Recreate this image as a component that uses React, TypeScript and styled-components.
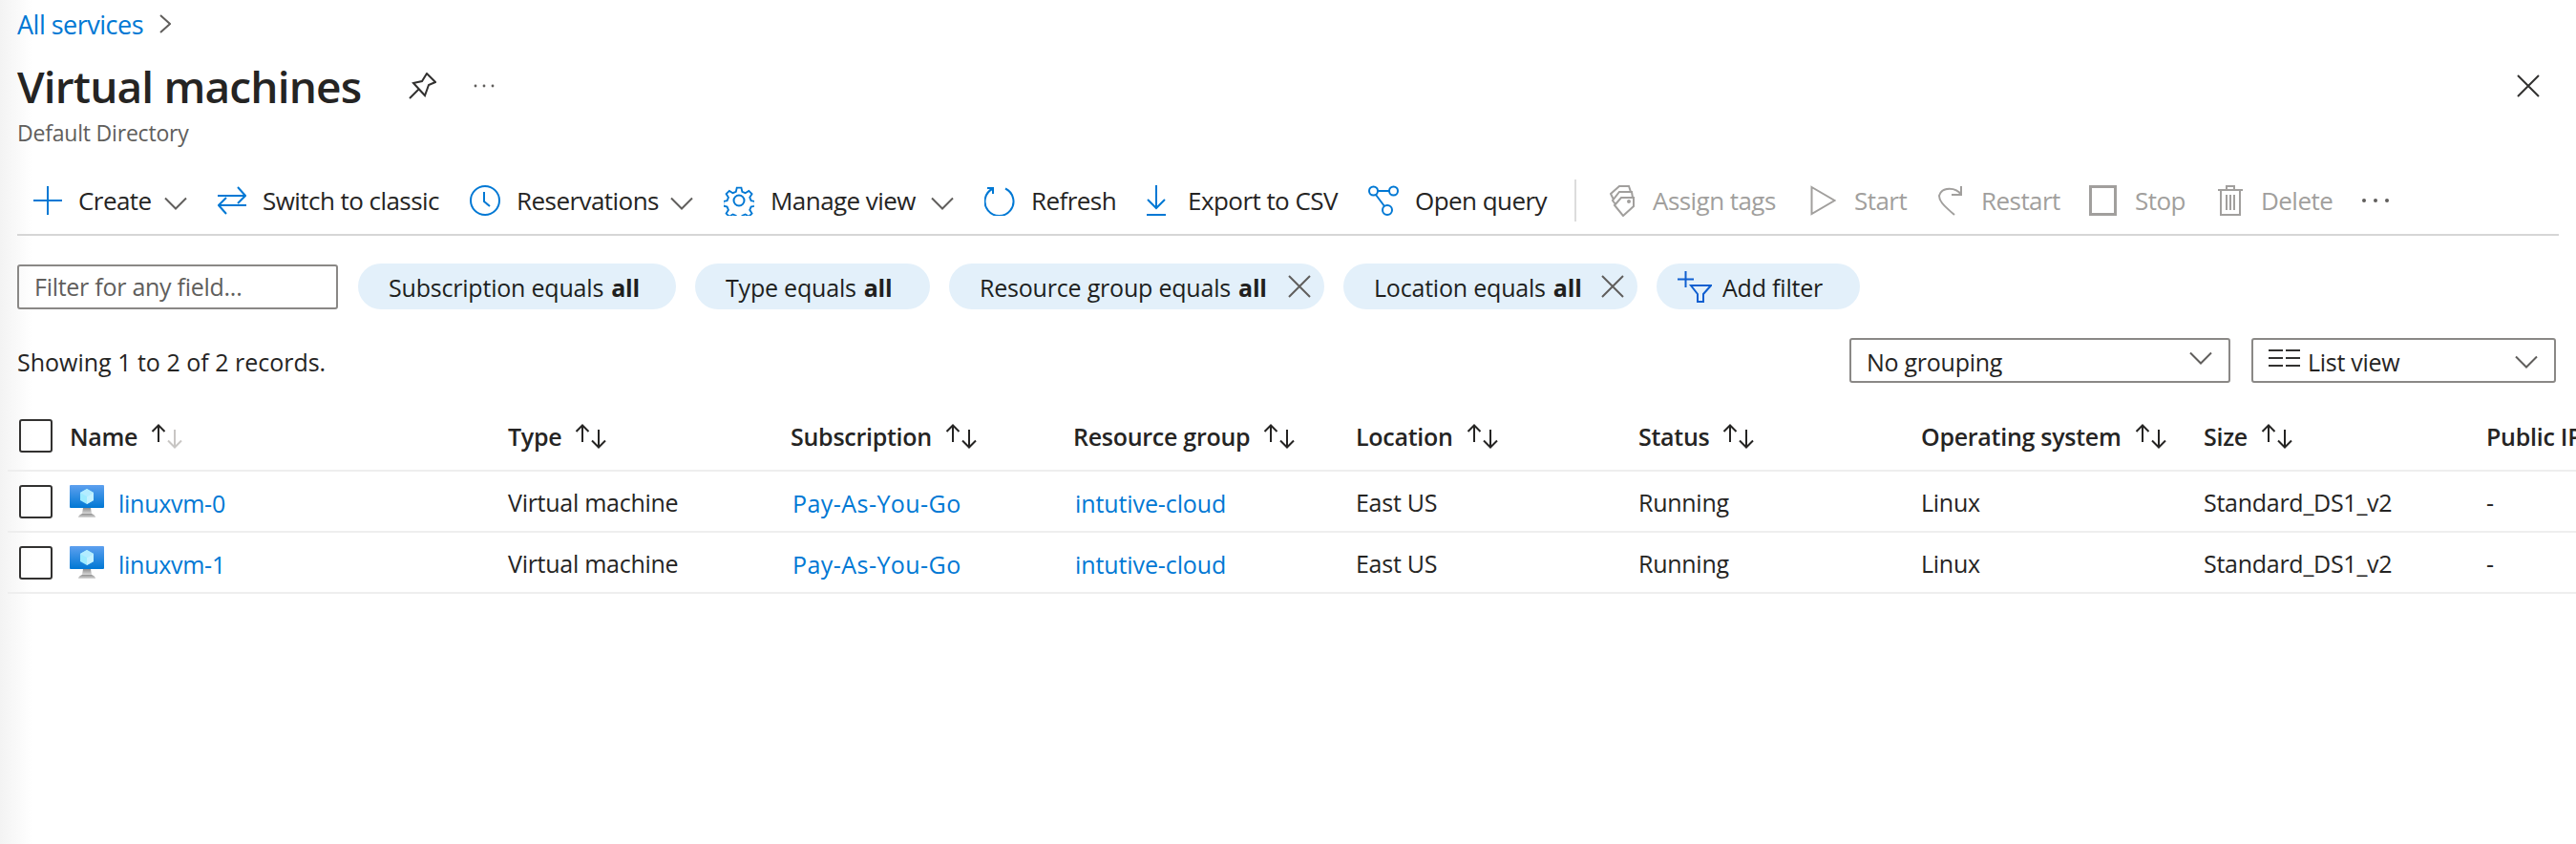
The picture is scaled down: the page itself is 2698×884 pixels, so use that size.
import React from 'react';
import styled, { createGlobalStyle } from 'styled-components';

const GlobalStyle = createGlobalStyle`
  html, body {
    margin: 0;
    padding: 0;
    background: #ffffff;
  }
`

const Page = styled.div`
  width: 2698px;
  height: 884px;
  box-sizing: border-box;
  padding: 0 18px;
  overflow: hidden;
  font-family: "Open Sans", "Noto Sans", sans-serif;
  font-size: 25px;
  letter-spacing: -0.27px;
  color: #252423;
  background: linear-gradient(90deg, #f3f3f3 0, #ffffff 34px);
`

const Breadcrumb = styled.div`
  height: 50px;
  display: flex;
  align-items: center;
  gap: 17px;
  font-size: 27px;
  letter-spacing: -0.5px;
`

const Link = styled.a`
  color: #0078d4;
  text-decoration: none;
`

const TitleRow = styled.div`
  height: 50px;
  margin-top: 15px;
  display: flex;
  align-items: center;
`

const Title = styled.h1`
  margin: 0 50px 0 0;
  font-size: 46px;
  font-weight: 600;
  letter-spacing: -0.85px;
  color: #252423;
`

const TitleAction = styled.span`
  display: flex;
  margin-right: 38px;
`

const CloseAction = styled.span`
  display: flex;
  margin-left: auto;
  margin-right: 20px;
`

const Subtitle = styled.div`
  height: 40px;
  margin-top: 4px;
  display: flex;
  align-items: center;
  font-size: 23px;
  letter-spacing: -0.2px;
  color: #605e5c;
`

const Toolbar = styled.div`
  height: 70px;
  margin-top: 16px;
  padding-left: 17px;
  display: flex;
  align-items: center;
  gap: 32px;
  border-bottom: 2px solid #d6d6d6;
  font-size: 26px;
  letter-spacing: -0.55px;
`

const ToolButton = styled.div<{ $disabled?: boolean; $narrow?: boolean }>`
  display: flex;
  align-items: center;
  gap: ${p => (p.$narrow ? 22 : p.$disabled ? 19 : 17)}px;
  margin-left: ${p => (p.$narrow ? 7 : p.$disabled ? 3 : 0)}px;
  color: ${p => (p.$disabled ? '#a19f9d' : '#252423')};
`

const Label = styled.span<{ $w: number }>`
  display: block;
  width: ${p => p.$w}px;
  white-space: nowrap;

  & + svg {
    margin-top: 6px;
  }
`

const Divider = styled.span`
  width: 2px;
  height: 44px;
  background: #dcdcdc;
`

const Filters = styled.div`
  margin-top: 29px;
  display: flex;
  align-items: center;
  gap: 20px;
`

const FilterInput = styled.div`
  width: 336px;
  height: 47px;
  box-sizing: border-box;
  border: 2px solid #8a8886;
  border-radius: 3px;
  padding-left: 16px;
  display: flex;
  align-items: center;
  color: #605e5c;
  margin-right: 1px;
`

const Chip = styled.div<{ $w: number }>`
  width: ${p => p.$w}px;
  height: 48px;
  box-sizing: border-box;
  border-radius: 24px;
  background: #e3f0fa;
  padding: 2px 14px 0 32px;
  display: flex;
  align-items: center;
  white-space: nowrap;
  letter-spacing: -0.2px;
  color: #201f1e;

  b {
    font-weight: 700;
    margin-left: 8px;
  }

  svg {
    margin-left: auto;
    margin-top: -2px;
  }
`

const AddChip = styled(Chip)`
  padding-left: 22px;
  gap: 11px;

  svg {
    margin-left: 0;
  }
`

const SummaryRow = styled.div`
  height: 47px;
  margin-top: 30px;
  padding-right: 3px;
  display: flex;
  align-items: center;
  gap: 22px;
`

const Summary = styled.div`
  margin-right: auto;
  padding-top: 2px;
  letter-spacing: 0;
`

const Select = styled.div<{ $w: number }>`
  width: ${p => p.$w}px;
  height: 47px;
  box-sizing: border-box;
  border: 2px solid #8a8886;
  border-radius: 3px;
  padding: 3px 17px 0 16px;
  display: flex;
  align-items: center;
  gap: 8px;

  svg:first-child {
    margin-top: -8px;
  }

  svg:last-child {
    margin-left: auto;
  }
`

const Table = styled.div`
  margin-left: -10px;
  width: 3100px;
`

const TableRow = styled.div<{ $header?: boolean }>`
  height: ${p => (p.$header ? 93 : 64)}px;
  box-sizing: border-box;
  padding-left: 12px;
  padding-top: ${p => (p.$header ? 20 : 0)}px;
  display: grid;
  grid-template-columns: 53px 459px repeat(8, 296px);
  align-items: center;
  border-bottom: 2px solid #eeeeee;
  font-weight: ${p => (p.$header ? 600 : 400)};
`

const Check = styled.span`
  display: block;
  width: 35px;
  height: 35px;
  box-sizing: border-box;
  border: 2px solid #323130;
  border-radius: 3px;
`

const HeaderCell = styled.div`
  display: flex;
  align-items: center;
  gap: 14px;
  white-space: nowrap;
`

const NameCell = styled.div`
  display: flex;
  align-items: center;
  gap: 15px;

  a {
    padding-top: 3px;
  }
`

const Cell = styled.div`
  padding-top: 2px;
  white-space: nowrap;
`

const LinkCell = styled(Cell)<{ $spacing: number }>`
  padding: 4px 0 0 2px;
  letter-spacing: ${p => p.$spacing}px;
`

const Icon: React.FC<{ w?: number; h?: number; children: React.ReactNode; stroke?: string }> = ({ w = 32, h = 32, children, stroke = '#0078d4' }) => (
  <svg width={w} height={h} viewBox={`0 0 ${w} ${h}`} fill="none" stroke={stroke} strokeWidth={2} style={{ flexShrink: 0 }}>
    {children}
  </svg>
)

const Chevron = () => (
  <Icon w={24} h={14} stroke="#605e5c"><path d="M1 1.5 12 12.5 23 1.5" /></Icon>
)

const Cross = ({ size = 24, color = '#605e5c' }: { size?: number; color?: string }) => (
  <Icon w={size} h={size} stroke={color}><path d={`M1 1 ${size - 1} ${size - 1}M${size - 1} 1 1 ${size - 1}`} /></Icon>
)

const Dots = ({ color = '#605e5c', r = 1.5, w = 30 }: { color?: string; r?: number; w?: number }) => (
  <svg width={w} height="6" viewBox={`0 0 ${w} 6`} fill={color}>
    <circle cx="3" cy="3" r={r} /><circle cx={w / 2} cy="3" r={r} /><circle cx={w - 3} cy="3" r={r} />
  </svg>
)

const SortArrows = ({ muted }: { muted?: boolean }) => (
  <svg width="34" height="26" viewBox="0 0 34 26" fill="none" strokeWidth="2">
    <path d="M8 19V2M1.5 8 8 1.5 14.5 8" stroke="#252423" />
    <path d="M25 6V24M18 17.5 25 24.5 32 17.5" stroke={muted ? '#c8c6c4' : '#252423'} />
  </svg>
)

const VmIcon = () => (
  <svg width="36" height="34" viewBox="0 0 36 34">
    <defs>
      <linearGradient id="vmScreen" x1="0" y1="0" x2="0" y2="1">
        <stop offset="0" stopColor="#5ea0ef" />
        <stop offset="1" stopColor="#0078d4" />
      </linearGradient>
      <linearGradient id="vmStand" x1="0" y1="0" x2="0" y2="1">
        <stop offset="0" stopColor="#8f8f8f" />
        <stop offset="1" stopColor="#d8d8d8" />
      </linearGradient>
    </defs>
    <rect x="0" y="0" width="36" height="24" rx="1" fill="url(#vmScreen)" />
    <path d="M14 24h8l1 6h-10z" fill="url(#vmStand)" />
    <path d="M9 34c0-2 3-4 5-4h8c2 0 5 2 5 4z" fill="url(#vmStand)" />
    <path d="M18 4 25 8v8l-7 4-7-4V8z" fill="#9cebff" />
    <path d="M18 12 25 8v8l-7 4z" fill="#c3f1ff" />
    <path d="M18 12 11 8l7-4 7 4z" fill="#b3ecff" />
  </svg>
)

const columns = ['Type', 'Subscription', 'Resource group', 'Location', 'Status', 'Operating system', 'Size', 'Public IP']
const machines = ['linuxvm-0', 'linuxvm-1']
const chips = [
  { label: 'Subscription equals', w: 333 },
  { label: 'Type equals', w: 246 },
  { label: 'Resource group equals', w: 393, remove: true },
  { label: 'Location equals', w: 308, remove: true },
]

const App: React.FC = () => (
  <Page>
    <GlobalStyle />
    <Breadcrumb>
      <Link>All services</Link>
      <Icon w={12} h={20} stroke="#605e5c"><path d="M1 1 11 10 1 19" /></Icon>
    </Breadcrumb>

    <TitleRow>
      <Title>Virtual machines</Title>
      <TitleAction>
        <Icon w={29} h={28} stroke="#323130">
          <path d="M1 27 10 18M5 11 14 9 19 1 28 10 21 13 17 24z" />
        </Icon>
      </TitleAction>
      <TitleAction><Dots w={24} r={1.4} /></TitleAction>
      <CloseAction><Cross color="#323130" /></CloseAction>
    </TitleRow>
    <Subtitle>Default Directory</Subtitle>

    <Toolbar>
      <ToolButton>
        <Icon w={30} h={30}><path d="M15 0V30M0 15H30" /></Icon>
        <Label $w={73}>Create</Label>
        <Chevron />
      </ToolButton>
      <ToolButton>
        <Icon w={30} h={32}><path d="M0 11H29M21 2 29 11 21 19M30 21H1M9 13 1 21 9 30" /></Icon>
        <Label $w={185}>Switch to classic</Label>
      </ToolButton>
      <ToolButton>
        <Icon w={32} h={32}><circle cx="16" cy="16" r="15" /><path d="M15 7V17L21 22" /></Icon>
        <Label $w={144}>Reservations</Label>
        <Chevron />
      </ToolButton>
      <ToolButton>
        <Icon w={32} h={32}>
          <circle cx="16" cy="16" r="5.5" />
          <path d="M13.5 1.5h5l1 4.5 3.5 1.5 4-2.5 3.5 3.5-2.5 4 1.5 3.5 4.5 1v5l-4.5 1-1.5 3.5 2.5 4-3.5 3.5-4-2.5-3.5 1.5-1 4.5h-5l-1-4.5-3.5-1.5-4 2.5-3.5-3.5 2.5-4-1.5-3.5-4.5-1v-5l4.5-1 1.5-3.5-2.5-4 3.5-3.5 4 2.5 3.5-1.5z" transform="translate(1.2 1.2) scale(.93)" />
        </Icon>
        <Label $w={151}>Manage view</Label>
        <Chevron />
      </ToolButton>
      <ToolButton>
        <Icon w={32} h={32}><path d="M22 3.5A15 15 0 1 1 9 3.5M9 9V3H3" /></Icon>
        <Label $w={81}>Refresh</Label>
      </ToolButton>
      <ToolButton $narrow>
        <Icon w={22} h={32}><path d="M11 0V24M2 15 11 24 20 15M1 31H21" /></Icon>
        <Label $w={157}>Export to CSV</Label>
      </ToolButton>
      <ToolButton>
        <Icon w={32} h={32}>
          <circle cx="5.5" cy="6" r="4.5" /><circle cx="26.5" cy="6" r="4.5" /><circle cx="20" cy="26" r="5" />
          <path d="M10 6H22M8 10 17 22" />
        </Icon>
        <Label $w={135}>Open query</Label>
      </ToolButton>
      <Divider />
      <ToolButton $disabled>
        <Icon w={26} h={34} stroke="#a19f9d">
          <path d="M5 22 12 14H25V23L14 33z" />
          <path d="M6 21 3 17 10 8H23L24 14" />
          <path d="M4 16 1 10 10 2H20L22 8" />
          <circle cx="20" cy="18" r="1" />
        </Icon>
        <Label $w={130}>Assign tags</Label>
      </ToolButton>
      <ToolButton $disabled>
        <Icon w={27} h={32} stroke="#a19f9d"><path d="M1.5 2 25.5 16 1.5 30z" /></Icon>
        <Label $w={53}>Start</Label>
      </ToolButton>
      <ToolButton $disabled>
        <Icon w={26} h={32} stroke="#a19f9d"><path d="M25 10H14M24 1V10M24 10C19 2 4 1 1 11 1 16 4 20 17 31" /></Icon>
        <Label $w={78}>Restart</Label>
      </ToolButton>
      <ToolButton $disabled>
        <Icon w={29} h={32} stroke="#a19f9d"><rect x="1.5" y="1.5" width="26" height="29" strokeWidth="3" /></Icon>
        <Label $w={52}>Stop</Label>
      </ToolButton>
      <ToolButton $disabled>
        <Icon w={26} h={32} stroke="#a19f9d">
          <path d="M0 5H26M9 5V1H17V5M3 5V31H23V5M9 10V26M13 10V26M17 10V26" />
        </Icon>
        <Label $w={73}>Delete</Label>
      </ToolButton>
      <Dots r={2} />
    </Toolbar>

    <Filters>
      <FilterInput>Filter for any field...</FilterInput>
      {chips.map(c => (
        <Chip key={c.label} $w={c.w}>
          {c.label}<b>all</b>
          {c.remove && <Cross />}
        </Chip>
      ))}
      <AddChip $w={213}>
        <Icon w={36} h={33} stroke="#0f5fd0">
          <path d="M8.5 0V17M0 8.5H17M14 15H35L27 24V32H21V24z" />
        </Icon>
        Add filter
      </AddChip>
    </Filters>

    <SummaryRow>
      <Summary>Showing 1 to 2 of 2 records.</Summary>
      <Select $w={399}>No grouping<Chevron /></Select>
      <Select $w={319}>
        <Icon w={33} h={20} stroke="#323130">
          <path d="M0 2H15M18 2H33M0 10H15M18 10H33M0 18H15M18 18H33" />
        </Icon>
        List view<Chevron />
      </Select>
    </SummaryRow>

    <Table>
      <TableRow $header>
        <Check />
        <HeaderCell>Name <SortArrows muted /></HeaderCell>
        {columns.map(c => (
          <HeaderCell key={c}>{c}{c !== 'Public IP' && <SortArrows />}</HeaderCell>
        ))}
      </TableRow>
      {machines.map(name => (
        <TableRow key={name}>
          <Check />
          <NameCell><VmIcon /><Link>{name}</Link></NameCell>
          <Cell>Virtual machine</Cell>
          <LinkCell $spacing={0.45}><Link>Pay-As-You-Go</Link></LinkCell>
          <LinkCell $spacing={-0.1}><Link>intutive-cloud</Link></LinkCell>
          <Cell>East US</Cell>
          <Cell>Running</Cell>
          <Cell>Linux</Cell>
          <Cell>Standard_DS1_v2</Cell>
          <Cell>-</Cell>
        </TableRow>
      ))}
    </Table>
  </Page>
);

export default App;
